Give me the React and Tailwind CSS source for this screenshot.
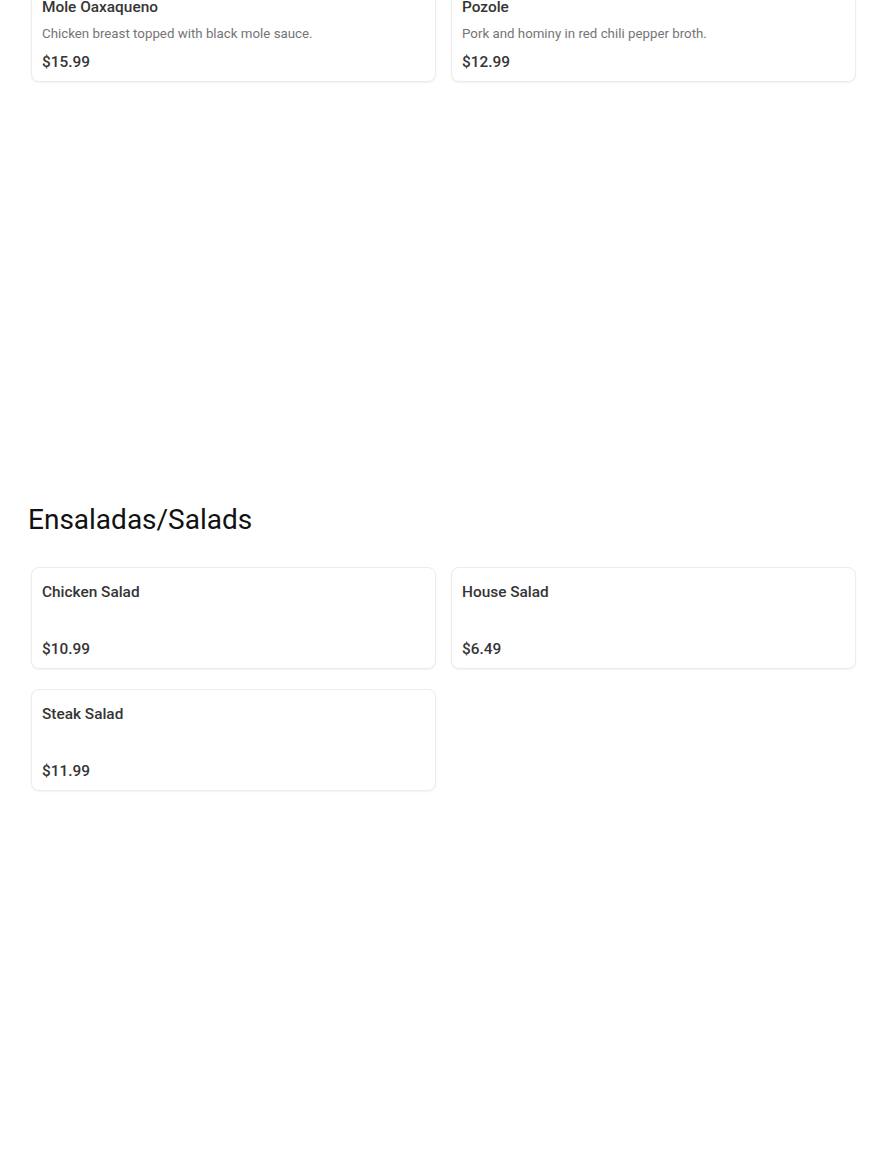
const platos = [
  { name: "Mole Oaxaqueno", desc: "Chicken breast topped with black mole sauce.", price: "$15.99" },
  { name: "Pozole", desc: "Pork and hominy in red chili pepper broth.", price: "$12.99" },
];

const ensaladas = [
  { name: "Chicken Salad", desc: "", price: "$10.99" },
  { name: "House Salad", desc: "", price: "$6.49" },
  { name: "Steak Salad", desc: "", price: "$11.99" },
];

const MenuCard = ({ item }) => (
  <div className="bg-white border border-[#ececec] rounded-lg shadow-[0_1px_2px_rgba(0,0,0,0.05)] px-[10px] pt-[14px] pb-[9px]">
    <div className="text-[15.4px] leading-[20px] font-medium text-[#353535] mb-2">
      {item.name}
    </div>
    {item.desc ? (
      <p className="text-[13.3px] leading-[18px] text-[#757575] mb-[9px]">{item.desc}</p>
    ) : (
      <div className="h-[20px] mb-[9px]"></div>
    )}
    <div className="text-[15.4px] leading-[20px] font-medium text-[#353535]">
      {item.price}
    </div>
  </div>
);

const MenuGrid = ({ items }) => (
  <div className="grid grid-cols-2 gap-x-[15px] gap-y-5 pl-[31px] pr-[34px]">
    {items.map((item) => (
      <MenuCard key={item.name} item={item} />
    ))}
  </div>
);

export default function App() {
  return (
    <div className="min-h-[1163px] bg-white overflow-hidden" style={{ fontFamily: "Roboto, 'Noto Sans', sans-serif" }}>
      <section className="-mt-[18px]">
        <MenuGrid items={platos} />
      </section>

      <section className="mt-[421px]">
        <h2 className="pl-[28px] text-[28px] leading-[34px] font-normal text-[#111] mb-[30px]">
          Ensaladas/Salads
        </h2>
        <MenuGrid items={ensaladas} />
      </section>
    </div>
  );
}
